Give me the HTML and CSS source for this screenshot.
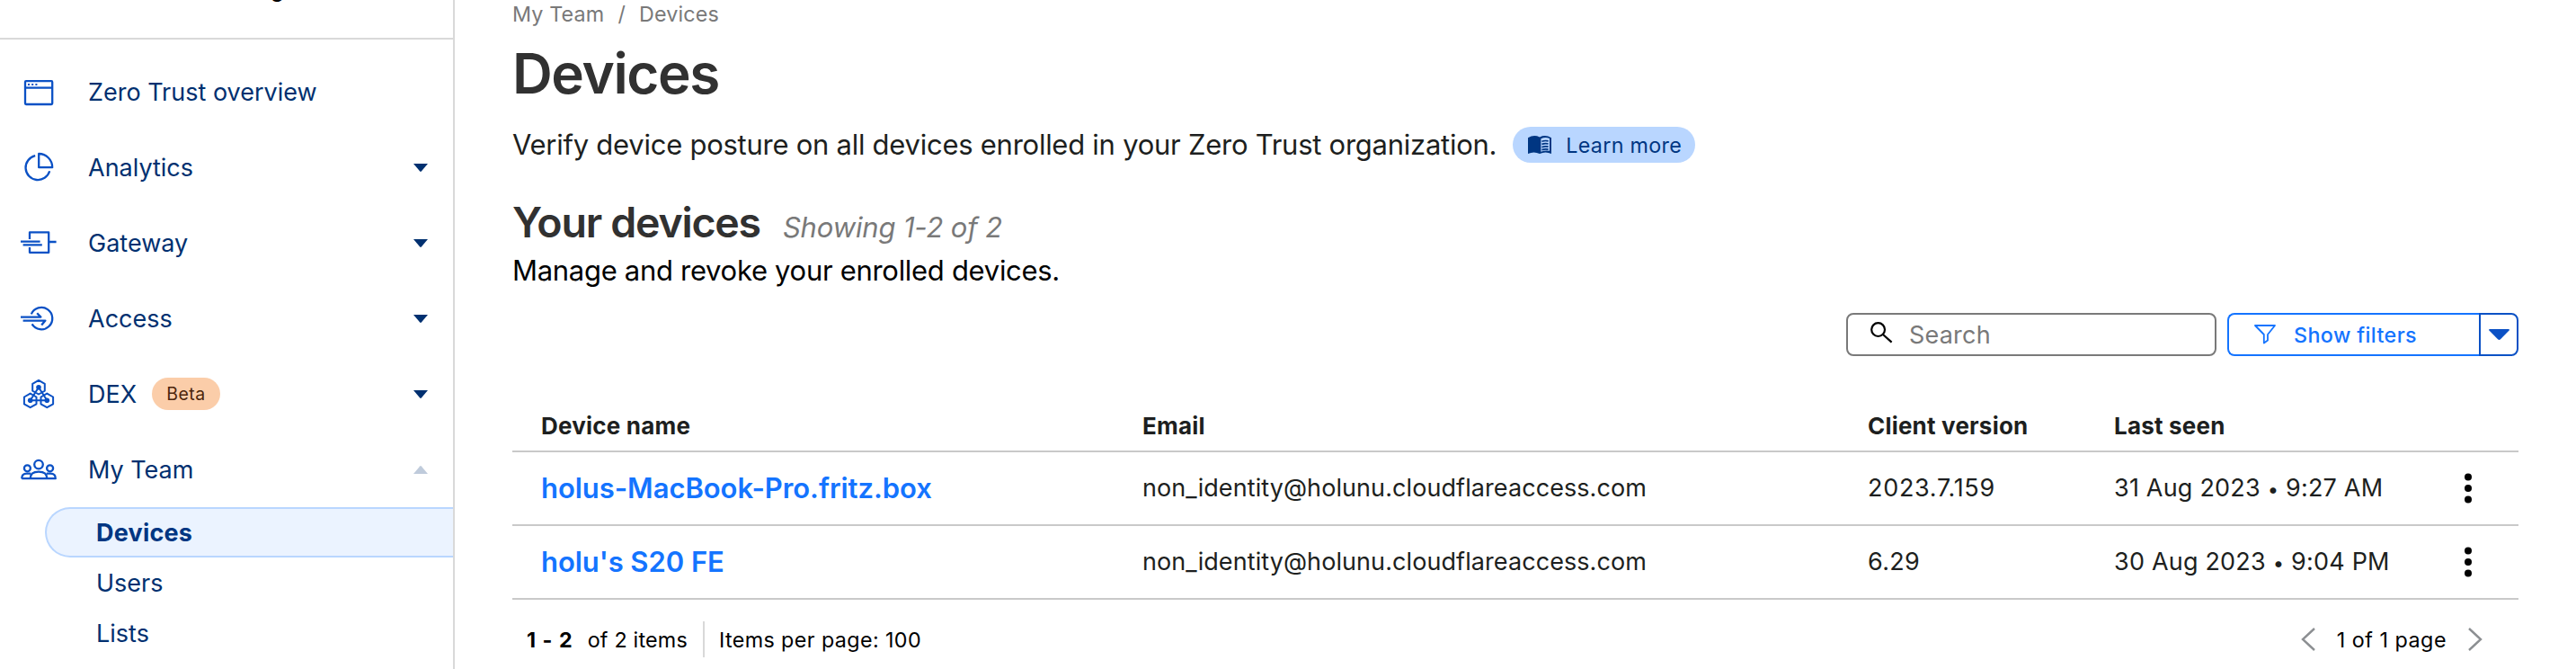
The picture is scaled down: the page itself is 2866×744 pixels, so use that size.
FILE: index.html
```
<!DOCTYPE html>
<html lang="en">
<head>
<meta charset="utf-8">
<title>Devices</title>
<link rel="stylesheet" href="styles.css">
</head>
<body>
<div class="app">
  <aside class="sidebar">
    <div class="account"><span class="account-name">g</span></div>
    <nav class="nav">
      <a class="nav-item">
        <svg class="nav-icon" viewBox="0 0 40 40"><rect x="5" y="8.2" width="30.2" height="25.8" rx="1"/><path d="M5 15.6h30"/><path class="solid" d="M8 11h2v2h-2zM12.2 11h2v2h-2zM16.4 11h2v2h-2z"/></svg>
        <span>Zero Trust overview</span>
      </a>
      <a class="nav-item">
        <svg class="nav-icon" viewBox="0 0 40 40"><path d="M32.2 24.3A13.6 13.6 0 1 1 16.2 7.2"/><path d="M20.2 5v15.2h15A15 15 0 0 0 20.2 5z"/></svg>
        <span>Analytics</span>
        <svg class="caret" viewBox="0 0 16 9"><path d="M0 0h16L8.8 8.6q-.8.6-1.6 0z"/></svg>
      </a>
      <a class="nav-item">
        <svg class="nav-icon" viewBox="0 0 40 40"><path d="M10 16V8.4h21.2v22.4H10V25M31.2 19H39.6M0 18.6h21.6M2.6 22.4h21.2"/></svg>
        <span>Gateway</span>
        <svg class="caret" viewBox="0 0 16 9"><path d="M0 0h16L8.8 8.6q-.8.6-1.6 0z"/></svg>
      </a>
      <a class="nav-item">
        <svg class="nav-icon" viewBox="0 0 40 40"><path d="M11.8 15.4A12.2 12.2 0 1 1 12.6 26.4M0 18.6h22.4l-4.2-4.4M2.6 22.6h24.8l-4.2 5"/></svg>
        <span>Access</span>
        <svg class="caret" viewBox="0 0 16 9"><path d="M0 0h16L8.8 8.6q-.8.6-1.6 0z"/></svg>
      </a>
      <a class="nav-item">
        <svg class="nav-icon thin" viewBox="0 0 40 40"><path d="M20 4.9l6.8 3.9v7.8L20 20.5l-6.8-3.9V8.8zM10.7 19.6l6.8 3.9v7.8l-6.8 3.9-6.8-3.9v-7.8zM29.3 19.6l6.8 3.9v7.8l-6.8 3.9-6.8-3.9v-7.8zM20 12.7L10.7 27.3h18.6z"/><g class="solid"><circle cx="20" cy="12.7" r="2.8"/><circle cx="10.7" cy="27.3" r="2.8"/><circle cx="29.3" cy="27.3" r="2.8"/></g></svg>
        <span>DEX</span>
        <span class="beta">Beta</span>
        <svg class="caret" viewBox="0 0 16 9"><path d="M0 0h16L8.8 8.6q-.8.6-1.6 0z"/></svg>
      </a>
      <a class="nav-item">
        <svg class="nav-icon" viewBox="0 0 40 40"><circle cx="20" cy="14.6" r="4.8"/><circle cx="7.4" cy="18.8" r="3.5"/><circle cx="32.6" cy="18.8" r="3.5"/><path d="M10.6 30.2c0-5 3.6-7.6 9.4-7.6s9.4 2.6 9.4 7.6M1.2 30.2h37.6c0-4-2.2-5.6-5.6-5.6h-4.4M1.2 30.2c0-4 2.2-5.6 5.6-5.6h4.4"/></svg>
        <span>My Team</span>
        <svg class="caret open" viewBox="0 0 16 9"><path d="M0 9h16L8.8.4q-.8-.6-1.6 0z"/></svg>
      </a>
      <div class="subnav">
        <a class="sub-item active">Devices</a>
        <a class="sub-item">Users</a>
        <a class="sub-item">Lists</a>
      </div>
    </nav>
  </aside>

  <main class="main">
    <div class="crumbs"><span>My Team</span><span>/</span><span>Devices</span></div>
    <h1 class="title">Devices</h1>
    <div class="intro">
      <span class="intro-text">Verify device posture on all devices enrolled in your Zero Trust organization.</span>
      <a class="learn">
        <svg class="book" viewBox="0 0 26 20"><path class="cover" d="M0 2.2Q6.5-1.6 13 1.4 19.5-1.6 26 2.2V20q-6.5-3-13 0-6.5-3-13 0z"/><path class="page" d="M14.4 3.2Q19.5.8 24 3v13.8q-4.5-1.2-9.6 1z"/><path class="lines" d="M15.4 6.2q3.6-1.2 7.2-.4M15.4 9.4q3.6-1.2 7.2-.4M15.4 12.6q3.6-1.2 7.2-.4M15.4 15.6q3.6-1.2 7.2-.4"/></svg>
        <span>Learn more</span>
      </a>
    </div>
    <div class="section-head"><h2 class="section-title">Your devices</h2><span class="showing">Showing 1-2 of 2</span></div>
    <p class="section-text">Manage and revoke your enrolled devices.</p>

    <div class="toolbar">
      <div class="search">
        <svg class="search-icon" viewBox="0 0 26 24"><circle cx="8.6" cy="8.6" r="7.4"/><path d="M14 14l9.6 8.6"/></svg>
        <span>Search</span>
      </div>
      <div class="filters">
        <div class="filter-main">
          <svg class="funnel" viewBox="0 0 24 22"><path d="M1 1h22l-8 10v6.6l-4.2 3V11z"/></svg>
          <span>Show filters</span>
        </div>
        <div class="filter-more"><svg class="filter-caret" viewBox="0 0 23 12"><path d="M1 0h21q1.4.4.6 1.4L13 11.2q-1.5 1.4-3 0L.4 1.4Q-.4.4 1 0z"/></svg></div>
      </div>
    </div>

    <div class="table">
      <div class="row head"><span>Device name</span><span>Email</span><span>Client version</span><span>Last seen</span></div>
      <div class="row">
        <a class="device">holus-MacBook-Pro.fritz.box</a>
        <span class="email">non_identity@holunu.cloudflareaccess.com</span>
        <span class="version">2023.7.159</span>
        <span class="date">31 Aug 2023 <span class="bullet">•</span> 9:27 AM</span>
        <svg class="dots" viewBox="0 0 8 34"><circle cx="4" cy="4.5" r="4"/><circle cx="4" cy="17" r="4"/><circle cx="4" cy="29.5" r="4"/></svg>
      </div>
      <div class="row">
        <a class="device">holu's S20 FE</a>
        <span class="email">non_identity@holunu.cloudflareaccess.com</span>
        <span class="short-version">6.29</span>
        <span class="date">30 Aug 2023 <span class="bullet">•</span> 9:04 PM</span>
        <svg class="dots" viewBox="0 0 8 34"><circle cx="4" cy="4.5" r="4"/><circle cx="4" cy="17" r="4"/><circle cx="4" cy="29.5" r="4"/></svg>
      </div>
    </div>

    <div class="footer">
      <b class="range">1 - 2</b><span class="total">of 2 items</span>
      <span class="per-page">Items per page: 100</span>
      <div class="pager">
        <svg class="chevron" viewBox="0 0 16 26"><path d="M15 1L2 13l13 12"/></svg>
        <span>1 of 1 page</span>
        <svg class="chevron" viewBox="0 0 16 26"><path d="M1 1l13 12L1 25"/></svg>
      </div>
    </div>
  </main>
</div>
</body>
</html>
```
FILE: styles.css
```
* { box-sizing: border-box; }
body {
  margin: 0;
  background: #fff;
  color: #1d1f20;
  font-family: Inter, "Liberation Sans", sans-serif;
  white-space: nowrap;
}
svg { display: block; flex: none; }
.app { display: flex; height: 744px; overflow: hidden; }

/* Sidebar */
.sidebar { flex: none; width: 506px; border-right: 2px solid #d9d9d9; color: #003070; font-size: 27px; }
.account { height: 44px; border-bottom: 2px solid #d9d9d9; padding-left: 301px; color: #000; overflow: hidden; }
.account-name { display: block; margin-top: -23px; font-size: 24px; font-weight: 500; line-height: 24px; }
.nav { padding-top: 16px; }
.nav-item { display: flex; align-items: center; height: 84px; padding: 0 28px 0 23px; }
.nav-icon { width: 40px; height: 40px; margin-right: 35px; fill: none; stroke: #0b51c5; stroke-width: 2.3; stroke-linejoin: round; }
.nav-icon.thin { stroke-width: 2; }
.nav-icon .solid { fill: #0b51c5; stroke: none; }
.caret { width: 16px; height: 9px; margin-left: auto; fill: #003070; }
.caret.open { fill: #bfcbdb; }
.beta {
  height: 36px;
  margin-left: 17px;
  padding: 0 16px;
  border-radius: 18px;
  background: #fbcda9;
  color: #4c250b;
  font-size: 19.5px;
  letter-spacing: .5px;
  line-height: 36px;
}
.subnav { padding-left: 50px; }
.sub-item { display: block; height: 56px; padding-left: 57px; line-height: 57px; }
.sub-item.active {
  padding-left: 55px;
  border: 2px solid #b9d6ff;
  border-right: 0;
  border-radius: 28px 0 0 28px;
  background: #ebf3ff;
  color: #003682;
  font-weight: 700;
  letter-spacing: .2px;
  line-height: 53px;
}

/* Page heading */
.main { flex: 1; padding: 0 64px; }
.crumbs { display: flex; gap: 15px; color: #797979; font-size: 23.3px; letter-spacing: .15px; line-height: 32px; }
.title { margin: 0; color: #313131; font-size: 62px; font-weight: 600; letter-spacing: -1.4px; line-height: 99px; }
.intro { display: flex; align-items: center; gap: 18px; height: 40px; margin-top: 10px; }
.intro-text { font-size: 31px; letter-spacing: -.26px; line-height: 38px; }
.learn {
  display: flex;
  align-items: center;
  gap: 16px;
  width: 203px;
  height: 40px;
  padding-left: 17px;
  border-radius: 20px;
  background: #b9d6ff;
  color: #003682;
  font-size: 23.3px;
  letter-spacing: .3px;
}
.book { width: 26px; height: 20px; }
.book .cover { fill: #003682; }
.book .page { fill: #b9d6ff; }
.book .lines { fill: none; stroke: #003682; stroke-width: 1.7; }
.section-head { display: flex; align-items: baseline; gap: 25px; margin-top: 36px; height: 60px; }
.section-title { margin: 0; color: #313131; font-size: 46.5px; font-weight: 600; letter-spacing: -1.24px; line-height: 60px; }
.showing { color: #797979; font-size: 31px; font-style: italic; letter-spacing: -.15px; line-height: 32px; }
.section-text { margin: 0; color: #000; font-size: 31px; letter-spacing: -.3px; line-height: 48px; }

/* Search and filters */
.toolbar { display: flex; justify-content: flex-end; gap: 12px; margin-top: 23px; }
.search {
  display: flex;
  align-items: center;
  gap: 17px;
  width: 412px;
  height: 48px;
  padding-left: 25px;
  border: 2px solid #797979;
  border-radius: 8px;
  color: #797979;
  font-size: 27px;
  letter-spacing: .2px;
}
.search-icon { width: 26px; height: 24px; margin-top: -4px; fill: none; stroke: #000; stroke-width: 2.2; }
.filters { display: flex; }
.filter-main {
  display: flex;
  align-items: center;
  gap: 20px;
  width: 280px;
  height: 48px;
  padding-left: 28px;
  border: 2px solid #1474ff;
  border-right: 0;
  border-radius: 8px 0 0 8px;
  color: #1474ff;
  font-size: 23.3px;
  font-weight: 500;
  letter-spacing: .4px;
}
.funnel { width: 24px; height: 22px; fill: none; stroke: #1474ff; stroke-width: 1.8; stroke-linejoin: round; }
.filter-more { display: flex; align-items: center; justify-content: center; width: 44px; height: 48px; border: 2px solid #0b51c5; border-radius: 0 8px 8px 0; }
.filter-caret { width: 23px; height: 12px; fill: #0b51c5; }

/* Device table */
.table { margin-top: 50px; }
.row {
  display: grid;
  grid-template-columns: 669px 807px 274px 390px 1fr;
  align-items: center;
  height: 82px;
  padding-left: 32px;
  border-bottom: 2px solid #c9c9c9;
  font-size: 27px;
  line-height: 32px;
}
.row.head { height: 57px; font-size: 26px; font-weight: 650; letter-spacing: .2px; }
.device { color: #1474ff; font-size: 31px; font-weight: 600; letter-spacing: -.05px; line-height: 36px; }
.email { letter-spacing: .08px; }
.date { letter-spacing: .2px; }
.bullet { font-size: 22px; }
.version { letter-spacing: .7px; }
.short-version { letter-spacing: .3px; }
.dots { width: 8px; height: 34px; fill: #000; }

/* Pagination */
.footer { display: flex; align-items: center; height: 40px; margin-top: 24px; padding: 0 40px 0 16px; color: #000; font-size: 23.3px; line-height: 41px; }
.range { letter-spacing: 1px; }
.total { height: 40px; margin-left: 16px; padding-right: 17px; border-right: 2px solid #d9d9d9; letter-spacing: .2px; }
.per-page { margin-left: 16px; letter-spacing: .4px; }
.pager { display: flex; align-items: center; gap: 24px; margin-left: auto; letter-spacing: .5px; }
.chevron { width: 16px; height: 26px; fill: none; stroke: #8c8f92; stroke-width: 2.4; }
```
